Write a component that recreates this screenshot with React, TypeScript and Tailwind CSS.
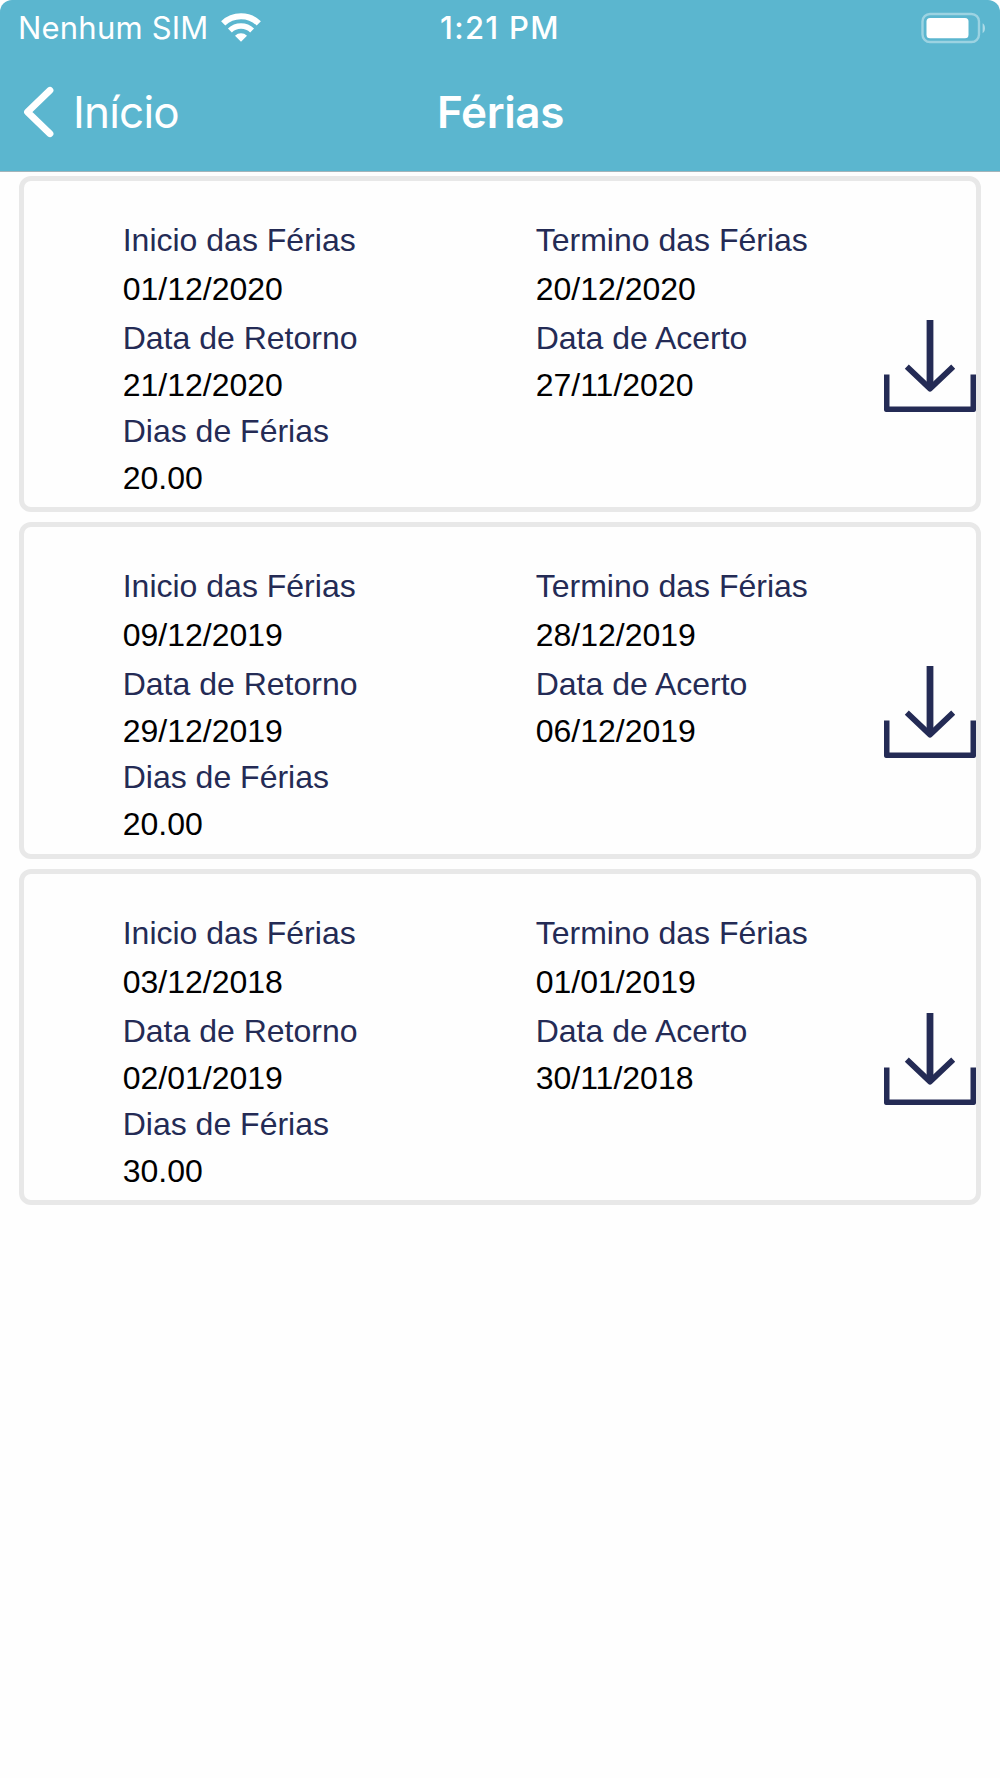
type Vacation = {
  start: string;
  end: string;
  returnDate: string;
  settlement: string;
  days: string;
};

const vacations: Vacation[] = [
  {
    start: "01/12/2020",
    end: "20/12/2020",
    returnDate: "21/12/2020",
    settlement: "27/11/2020",
    days: "20.00",
  },
  {
    start: "09/12/2019",
    end: "28/12/2019",
    returnDate: "29/12/2019",
    settlement: "06/12/2019",
    days: "20.00",
  },
  {
    start: "03/12/2018",
    end: "01/01/2019",
    returnDate: "02/01/2019",
    settlement: "30/11/2018",
    days: "30.00",
  },
];

function WifiIcon() {
  return (
    <svg className="w-[40px] h-[30px]" viewBox="0 0 40 30" fill="none">
      <path
        d="M2.2 10.4C12 .9 28 .9 37.8 10.4"
        stroke="white"
        strokeWidth="6"
      />
      <path
        d="M8.9 17.4C15 11.5 25 11.5 31.1 17.4"
        stroke="white"
        strokeWidth="5.6"
      />
      <path d="M14 22.8C17.4 19.5 22.6 19.5 26 22.8L20 28.8Z" fill="white" />
    </svg>
  );
}

function BatteryIcon() {
  return (
    <svg className="w-[66px] h-[32px]" viewBox="0 0 66 32" fill="none">
      <rect
        x="2.5"
        y="2"
        width="56.5"
        height="28"
        rx="7.5"
        stroke="white"
        strokeOpacity="0.4"
        strokeWidth="2.4"
      />
      <rect x="6.5" y="6" width="42" height="20.3" rx="3.5" fill="white" />
      <path d="M62.6 11.3C65.8 13 65.8 19.5 62.6 21.2Z" fill="white" fillOpacity="0.5" />
    </svg>
  );
}

function DownloadIcon() {
  return (
    <svg
      className="w-[92px] h-[93px]"
      viewBox="0 0 92 93"
      fill="none"
      stroke="#242b55"
    >
      <path d="M46 0V67" strokeWidth="6.8" />
      <path d="M22.8 46.6L46 68.6L69.2 46.6" strokeWidth="5.8" strokeLinejoin="round" />
      <path d="M2.7 54.5V89.2H89.3V54.5" strokeWidth="5.6" strokeLinejoin="round" />
    </svg>
  );
}

function VacationCard({ item }: { item: Vacation }) {
  return (
    <div className="flex h-[336.3px] rounded-[12px] border-[5px] border-[#e8e8e8] pl-[98.7px] text-[32px] text-black">
      <div className="w-[413px] pt-[35px]">
        <p className="leading-[49px] text-[#242b55]">Inicio das Férias</p>
        <p className="leading-[49px]">{item.start}</p>
        <p className="leading-[49px] text-[#242b55]">Data de Retorno</p>
        <p className="leading-[45px]">{item.returnDate}</p>
        <p className="leading-[47px] text-[#242b55]">Dias de Férias</p>
        <p className="leading-[47px]">{item.days}</p>
      </div>
      <div className="flex-1 pt-[35px]">
        <p className="leading-[49px] text-[#242b55]">Termino das Férias</p>
        <p className="leading-[49px]">{item.end}</p>
        <p className="leading-[49px] text-[#242b55]">Data de Acerto</p>
        <p className="leading-[45px]">{item.settlement}</p>
      </div>
      <button type="button" className="self-start mt-[139px] cursor-pointer">
        <DownloadIcon />
      </button>
    </div>
  );
}

function App() {
  return (
    <div className="min-h-[1778px] bg-[#fefefe] font-['Liberation_Sans',Arial,sans-serif]">
      <header className="h-[172px] rounded-t-[12px] border-b border-[#a3b4ba] bg-[#5bb6cf] text-white font-['Inter',sans-serif]">
        <div className="grid grid-cols-3 h-[54px] text-[31px] leading-[56px]">
          <div className="flex items-center pl-[18px]">
            <span className="tracking-[0.2px]">Nenhum SIM</span>
            <div className="ml-[12px]">
              <WifiIcon />
            </div>
          </div>
          <span className="text-center font-medium tracking-[1.3px]">1:21 PM</span>
          <div className="flex justify-end items-center pr-[14px]">
            <BatteryIcon />
          </div>
        </div>
        <div className="grid grid-cols-3 h-[116px] text-[44px] leading-[116px]">
          <div className="flex items-center pl-[23px]">
            <svg className="w-[32px] h-[52px]" viewBox="0 0 32 52" fill="none">
              <path
                d="M27 4.3L4.5 26L27 47.7"
                stroke="white"
                strokeWidth="6.8"
                strokeLinecap="round"
                strokeLinejoin="round"
              />
            </svg>
            <span className="ml-[18px] tracking-[-0.8px]">Início</span>
          </div>
          <h1 className="pl-[1px] text-center font-semibold tracking-[-0.4px]">Férias</h1>
        </div>
      </header>

      <main className="flex flex-col gap-[10.1px] px-[19px] pt-[4px]">
        {vacations.map((item) => (
          <VacationCard key={item.start} item={item} />
        ))}
      </main>
    </div>
  );
}

export default App;
